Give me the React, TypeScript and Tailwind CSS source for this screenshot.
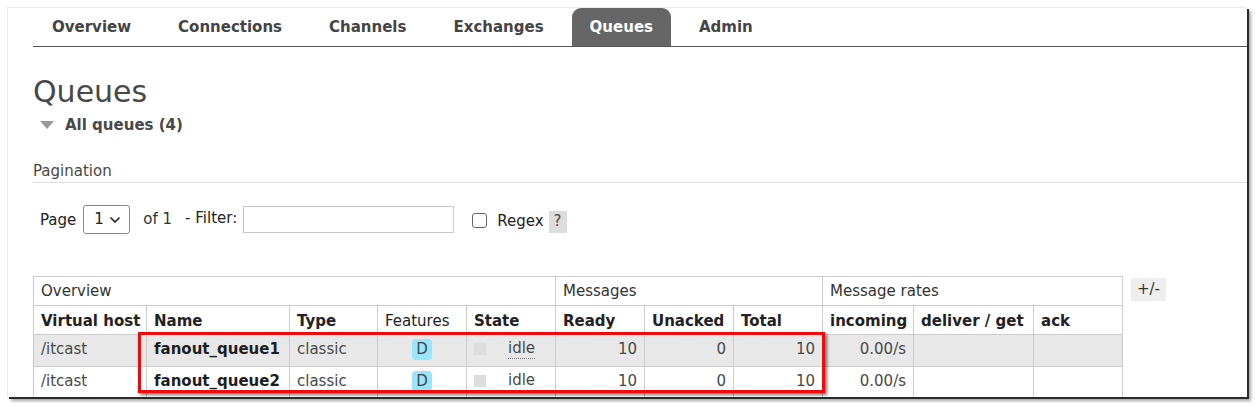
import { ChevronDown } from "lucide-react";

const tabs = ["Overview", "Connections", "Channels", "Exchanges", "Queues", "Admin"];

const rows = [
  { vhost: "/itcast", name: "fanout_queue1", type: "classic", ready: 10, unacked: 0, total: 10, incoming: "0.00/s" },
  { vhost: "/itcast", name: "fanout_queue2", type: "classic", ready: 10, unacked: 0, total: 10, incoming: "0.00/s" },
];

function NavTabs() {
  return (
    <ul className="ml-[25px] flex h-[39px] gap-[9px] border-b border-[#555]">
      {tabs.map((tab) => (
        <li
          key={tab}
          className={
            tab === "Queues"
              ? "flex items-center rounded-t-[9px] bg-[#666] px-[18px] text-[15px] font-bold text-white"
              : "flex items-center px-[19px] text-[15px] font-bold text-[#444]"
          }
        >
          {tab}
        </li>
      ))}
    </ul>
  );
}

function PaginationBar() {
  return (
    <div className="mt-[22px] flex h-[29px] items-center text-[15px] text-[#222]">
      <span className="ml-[7px] mt-[1px]">Page</span>
      <div className="ml-[7px] flex h-[29px] w-[47px] items-center justify-between rounded-[3px] border border-[#888] pl-[10px] pr-[6px]">
        <span>1</span>
        <ChevronDown className="h-4 w-4" strokeWidth={2.5} />
      </div>
      <span className="ml-[13px] text-[#333]">of 1</span>
      <span className="ml-[13px] -mt-[2px]">- Filter:</span>
      <input
        type="text"
        className="ml-[6px] h-[27px] w-[211px] border border-[#c8c8c8] bg-white outline-none"
      />
      <span className="ml-[18px] mt-[2px] h-[15px] w-[15px] rounded-[3px] border border-[#666] bg-white" />
      <span className="ml-[10px] mt-[4px]">Regex</span>
      <span className="ml-[5px] mt-[4px] flex h-[22px] w-[18px] items-center justify-center bg-[#ddd] text-[#444]">
        ?
      </span>
    </div>
  );
}

function QueueTable() {
  const group = "border border-[#ccc] px-[7px] pt-[1px] text-left font-normal text-[#333]";
  const th = "border border-[#ccc] px-[7px] pt-[3px] text-left font-bold text-[#222]";
  const td = "border border-[#ccc] px-[7px] pt-[2px] align-top leading-[24px]";
  return (
    <div className="mt-[42px] flex items-start gap-[8px]">
      <table className="w-[1089px] table-fixed border-collapse whitespace-nowrap text-[15px] text-[#484848]">
        <colgroup>
          <col className="w-[113px]" />
          <col className="w-[143px]" />
          <col className="w-[88px]" />
          <col className="w-[89px]" />
          <col className="w-[89px]" />
          <col className="w-[89px]" />
          <col className="w-[89px]" />
          <col className="w-[89px]" />
          <col className="w-[91px]" />
          <col className="w-[120px]" />
          <col className="w-[89px]" />
        </colgroup>
        <thead>
          <tr className="h-[29px]">
            <th colSpan={5} className={group}>
              Overview
            </th>
            <th colSpan={3} className={group}>
              Messages
            </th>
            <th colSpan={3} className={group}>
              Message rates
            </th>
          </tr>
          <tr className="h-[29px]">
            <th className={th}>Virtual host</th>
            <th className={th}>Name</th>
            <th className={th}>Type</th>
            <th className="border border-[#ccc] px-[7px] pt-[3px] text-left font-normal text-[#222]">Features</th>
            <th className={th}>State</th>
            <th className={th}>Ready</th>
            <th className={th}>Unacked</th>
            <th className={th}>Total</th>
            <th className={th}>incoming</th>
            <th className={th}>deliver / get</th>
            <th className={th}>ack</th>
          </tr>
        </thead>
        <tbody>
          {rows.map((row, i) => (
            <tr key={row.name} className={i === 0 ? "h-[32px] bg-[#e8e8e8]" : "h-[32px] bg-white"}>
              <td className={td}>{row.vhost}</td>
              <td className={`${td} font-bold text-[#1e1e1e]`}>{row.name}</td>
              <td className={td}>{row.type}</td>
              <td className={td}>
                <span className="mx-auto mt-[2px] flex h-[21px] w-[20px] items-center justify-center rounded-[4px] bg-[#99e6fa] leading-none text-[#444]">
                  D
                </span>
              </td>
              <td className={td}>
                <div className="flex items-center pt-[2px]">
                  <span className="h-[12px] w-[12px] bg-[#dcdcdc]" />
                  <span className="ml-[22px] border-b border-dotted border-[#777] leading-[19px]">idle</span>
                </div>
              </td>
              <td className={`${td} text-right`}>{row.ready}</td>
              <td className={`${td} text-right`}>{row.unacked}</td>
              <td className={`${td} text-right`}>{row.total}</td>
              <td className={`${td} text-right`}>{row.incoming}</td>
              <td className={td}></td>
              <td className={td}></td>
            </tr>
          ))}
        </tbody>
      </table>
      <span className="mt-[2px] flex h-[23px] w-[35px] items-center justify-center bg-[#eee] text-[15px] text-[#333]">
        +/-
      </span>
    </div>
  );
}

export default function App() {
  return (
    <div className="min-h-[406px] bg-white pl-[7px] pt-[7px] font-['DejaVu_Sans',sans-serif]">
      <div className="relative h-[390px] w-[1240px] overflow-hidden border-l border-t border-[#ececec] bg-white shadow-[2px_2px_0_#2a2a2a,4px_4px_3px_rgba(0,0,0,0.35)]">
        <NavTabs />

        <div className="pl-[25px]">
          <h1 className="mt-[27px] text-[30px] leading-[36px] font-normal text-[#484848]">Queues</h1>

          <div className="mt-[5px] flex h-[20px] items-center">
            <svg width="14" height="8" viewBox="0 0 14 8" className="ml-[7px]">
              <polygon points="0,0 14,0 7,8" fill="#9a9a9a" />
            </svg>
            <span className="ml-[11px] text-[15px] font-bold text-[#484848]">All queues (4)</span>
          </div>

          <div className="mt-[26px] border-b border-[#ddd] pb-[1px] text-[15px] leading-[20px] text-[#484848]">
            Pagination
          </div>

          <PaginationBar />

          <QueueTable />
        </div>

        {/* red highlight around the two fanout queues */}
        <div className="absolute left-[130px] top-[324px] h-[61px] w-[687px] border-[3px] border-[#ee0b0b] shadow-[2px_2px_3px_rgba(0,0,0,0.55)]" />
      </div>
    </div>
  );
}
